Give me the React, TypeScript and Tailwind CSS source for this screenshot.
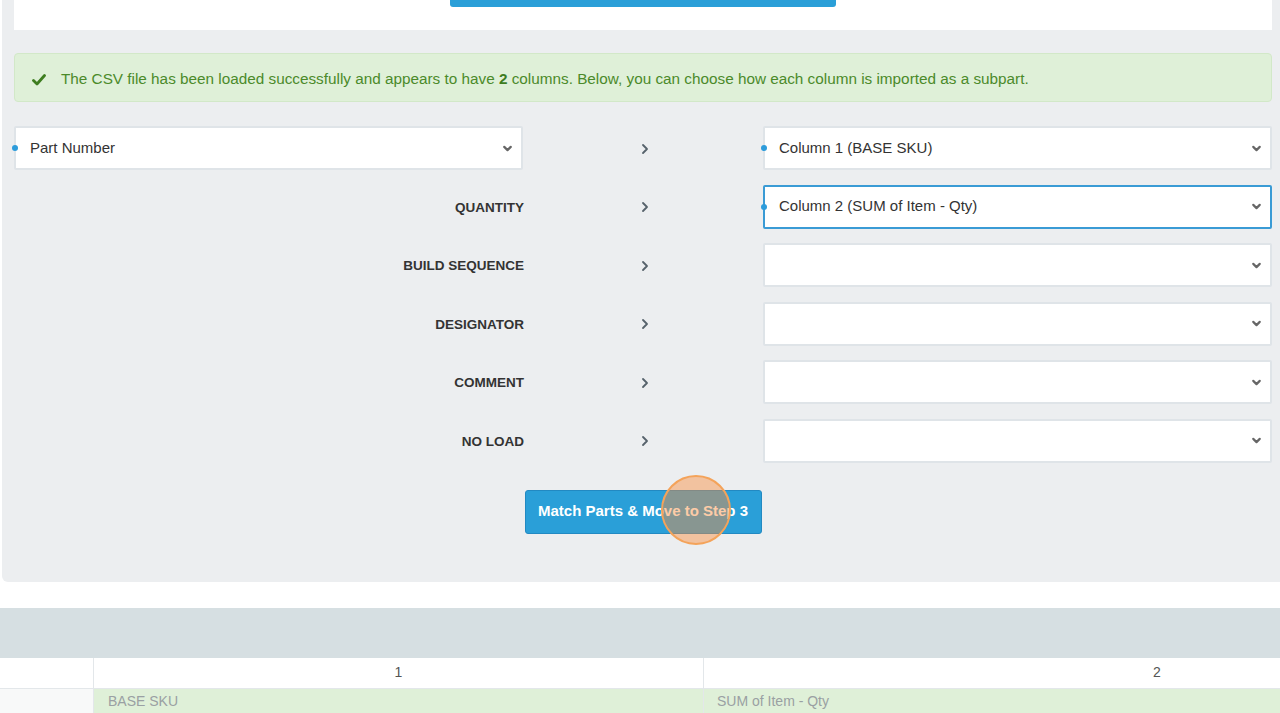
import { ChevronRight, ChevronDown } from 'lucide-react'

const rows = [
  { label: 'Part Number', isSelect: true, value: 'Column 1 (BASE SKU)', focused: false },
  { label: 'QUANTITY', isSelect: false, value: 'Column 2 (SUM of Item - Qty)', focused: true },
  { label: 'BUILD SEQUENCE', isSelect: false, value: '', focused: false },
  { label: 'DESIGNATOR', isSelect: false, value: '', focused: false },
  { label: 'COMMENT', isSelect: false, value: '', focused: false },
  { label: 'NO LOAD', isSelect: false, value: '', focused: false },
]

function Select({ value, focused, dot }: { value: string; focused?: boolean; dot?: boolean }) {
  return (
    <div
      className={
        'relative h-[44px] flex items-center justify-between bg-white rounded-[2px] pl-[14px] pr-[7px] ' +
        (focused ? 'border-2 border-[#3a9bd5]' : 'border-2 border-[#dfe4e8]')
      }
    >
      {dot && <span className="absolute left-[-4px] top-1/2 -translate-y-1/2 w-[6px] h-[6px] rounded-full bg-[#2d9cdb]" />}
      <span className="text-[15px] text-[#333]">{value}</span>
      <ChevronDown size={13} strokeWidth={4} className="text-[#666]" />
    </div>
  )
}

function App() {
  return (
    <div className="w-[1280px] h-[713px] overflow-hidden bg-white" style={{ fontFamily: '"Liberation Sans", Arial, sans-serif' }}>
      <div className="ml-[2px] bg-[#eceef0] rounded-bl-[6px] pl-3 pr-[8px] pb-[48px]">
        <div className="h-[30px] bg-white flex justify-center">
          <div className="w-[386px] h-[7px] bg-[#2a9fd8] rounded-b-[3px]" />
        </div>

        <div className="mt-[23px] h-[49px] flex items-center gap-[15px] pl-[17px] pt-[3px] bg-[#dff0d8] border border-[#d2e8c8] rounded-[4px] text-[15.3px] text-[#4b8a2a]">
          <svg width="14" height="12" viewBox="0 0 14 12" className="mt-[1px]">
            <path d="M1.5 6.5 L5 10 L12.5 1.5" fill="none" stroke="#3e7d1f" strokeWidth="2.8" strokeLinecap="round" strokeLinejoin="round" />
          </svg>
          <span>
            The CSV file has been loaded successfully and appears to have <b className="text-[#3e7d1f]">2</b> columns. Below, you can choose how each column is imported as a subpart.
          </span>
        </div>

        <div className="mt-[24px] flex flex-col gap-[14.5px]">
          {rows.map((r) => (
            <div key={r.label} className="grid grid-cols-[1fr_240px_1fr] items-center">
              {r.isSelect ? (
                <Select value={r.label} dot />
              ) : (
                <div className="text-right text-[13.5px] font-bold text-[#333] mr-[-1px] pt-[3px]">{r.label}</div>
              )}
              <div className="flex justify-center pl-[4px] pt-[1px]">
                <ChevronRight size={16} strokeWidth={2.75} className="text-[#56626b]" />
              </div>
              <Select value={r.value} focused={r.focused} dot={r.value !== ''} />
            </div>
          ))}
        </div>

        <div className="mt-[27px] flex justify-center relative">
          <button className="w-[237px] h-[44px] bg-[#2a9fd8] border border-[#2289c2] rounded-[3px] text-white font-bold text-[15px]">
            Match Parts &amp; Move to Step 3
          </button>
          <span className="absolute left-[647px] top-[-15px] w-[70px] h-[70px] rounded-full border-2 border-[#f4a35a] bg-[rgba(250,140,60,0.45)]" />
        </div>
      </div>

      <div className="mt-[26px] h-[50px] bg-[#d6dfe2]" />

      <div className="w-[1610px]">
        <div className="flex h-[30px] bg-white text-[14px] text-[#555]">
          <div className="w-[94px] border-r border-[#e3e7ea]" />
          <div className="w-[610px] border-r border-[#e3e7ea] flex items-center justify-center">1</div>
          <div className="flex-1 flex items-center justify-center">2</div>
        </div>
        <div className="flex h-[26px] text-[14px] text-[#9aa0a3] border-t border-[#e3e7ea]">
          <div className="w-[94px] bg-[#f8f9f9] border-r border-[#e3e7ea]" />
          <div className="w-[610px] bg-[#dff0d8] border-r border-[#e3e7ea] flex items-center pl-[14px]">BASE SKU</div>
          <div className="flex-1 bg-[#dff0d8] flex items-center pl-[13px]">SUM of Item - Qty</div>
        </div>
      </div>
    </div>
  )
}

export default App
